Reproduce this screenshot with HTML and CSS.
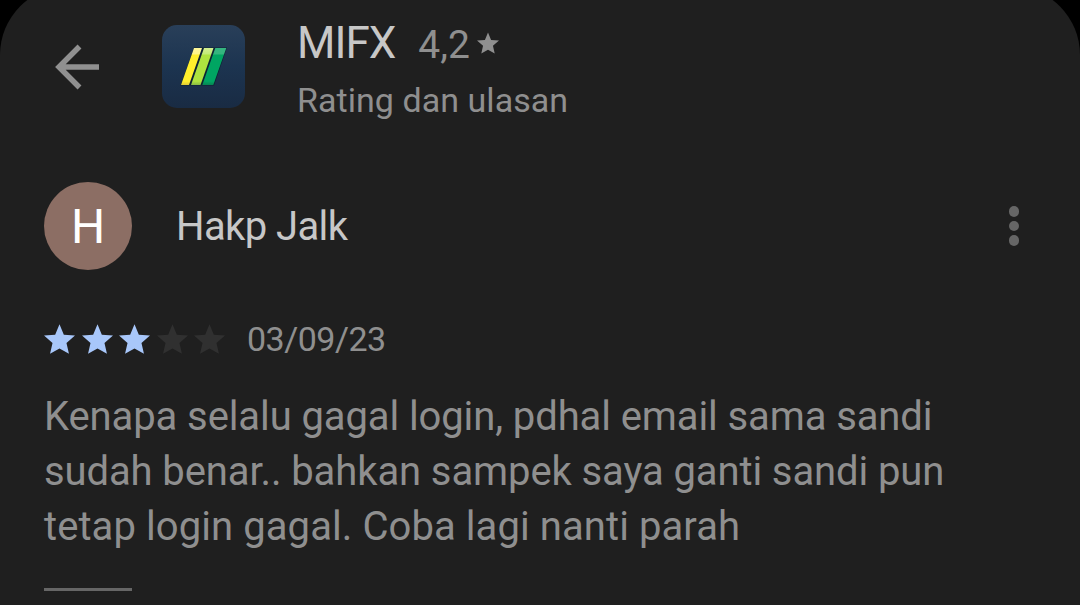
FILE: index.html
```
<!DOCTYPE html>
<html lang="id">

<head>
    <meta charset="UTF-8">
    <meta name="viewport" content="width=device-width, initial-scale=1.0">
    <title>MIFX - Rating dan ulasan</title>
    <link rel="stylesheet" href="styles.css">
</head>

<body>
    <svg class="sprite" width="0" height="0">
        <symbol id="star" viewBox="2 2 20 19">
            <path d="M12 17.6 18.1 21l-1.6-6.9L22 9.200l-7.200-.4L12 2 9.200 8.800 2 9.200l5.500 4.900L5.900 21z" />
        </symbol>
    </svg>

    <div class="sheet">
        <header class="header">
            <svg class="back" viewBox="0 0 46 46">
                <path d="M44 23H4M24.500 2.500 4 23l20.500 20.500" />
            </svg>
            <svg class="app-icon" viewBox="0 0 83 83">
                <defs>
                    <linearGradient id="navy" x1="0" y1="0" x2="0" y2="1">
                        <stop offset="0" stop-color="#293f59" />
                        <stop offset=".5" stop-color="#1c3450" />
                        <stop offset="1" stop-color="#192b43" />
                    </linearGradient>
                    <linearGradient id="yellow" x1="0" y1="0" x2="0" y2="1">
                        <stop offset="0" stop-color="#fff79a" />
                        <stop offset=".15" stop-color="#fff68a" />
                        <stop offset=".2" stop-color="#ffef2c" />
                        <stop offset=".9" stop-color="#ffef2c" />
                        <stop offset="1" stop-color="#ddc936" />
                    </linearGradient>
                    <linearGradient id="lime" x1="0" y1="0" x2="0" y2="1">
                        <stop offset="0" stop-color="#d3ef91" />
                        <stop offset=".15" stop-color="#c4eb79" />
                        <stop offset=".2" stop-color="#aee33f" />
                        <stop offset=".9" stop-color="#aee33f" />
                        <stop offset="1" stop-color="#86b944" />
                    </linearGradient>
                    <linearGradient id="green" x1="0" y1="0" x2="0" y2="1">
                        <stop offset="0" stop-color="#36b580" />
                        <stop offset=".15" stop-color="#34b57e" />
                        <stop offset=".2" stop-color="#00a562" />
                        <stop offset=".9" stop-color="#00a562" />
                        <stop offset="1" stop-color="#078452" />
                    </linearGradient>
                </defs>
                <rect width="83" height="83" rx="15" fill="url(#navy)" />
                <path class="shade" d="M32 22.500h33L52 60.500H18.500z" />
                <path fill="url(#yellow)" d="M32 23h8L27 60h-8z" />
                <path fill="url(#lime)" d="M42 23h9.500L38.500 60H29z" />
                <path fill="url(#green)" d="M53.300 23h11L51.300 60h-11z" />
            </svg>
            <div class="app">
                <div class="app-title">
                    <span class="app-name">MIFX</span>
                    <span class="score">4,2</span>
                    <svg class="score-star"><use href="#star" /></svg>
                </div>
                <div class="subtitle">Rating dan ulasan</div>
            </div>
        </header>

        <section class="review">
            <div class="author">
                <div class="avatar">H</div>
                <div class="author-name">Hakp Jalk</div>
                <div class="menu"><i></i><i></i><i></i></div>
            </div>

            <div class="rating">
                <div class="stars">
                    <svg class="star on"><use href="#star" /></svg>
                    <svg class="star on"><use href="#star" /></svg>
                    <svg class="star on"><use href="#star" /></svg>
                    <svg class="star"><use href="#star" /></svg>
                    <svg class="star"><use href="#star" /></svg>
                </div>
                <span class="date">03/09/23</span>
            </div>

            <p class="text">
                <span class="line">Kenapa selalu gagal login, pdhal email sama sandi</span>
                <span class="line">sudah benar.. bahkan sampek saya ganti sandi pun</span>
                <span class="line last">tetap login gagal. Coba lagi nanti parah</span>
            </p>
            <div class="divider"></div>
        </section>
    </div>
</body>

</html>
```
FILE: styles.css
```
* {
    margin: 0;
    padding: 0;
    box-sizing: border-box;
}

html {
    background-color: #000;
}

body {
    height: 605px;
    overflow: hidden;
    font-family: Roboto, "Liberation Sans", sans-serif;
    color: #8f8f8f;
}

.sprite {
    display: none;
}

.sheet {
    height: 619px;
    margin-top: -14px;
    padding-top: 30px;
    border-radius: 69px 69px 0 0;
    background-color: #1f1f1f;
}

/* header */
.header {
    height: 166px;
    padding-left: 55px;
    display: flex;
    align-items: flex-start;
}

.back {
    width: 46px;
    height: 46px;
    margin-top: 28px;
    fill: none;
    stroke: #909090;
    stroke-width: 5.5;
}

.app-icon {
    width: 83px;
    height: 83px;
    margin: 9px 52px 0 61px;
}

.shade {
    fill: #0c2233;
}

.app-title {
    height: 56px;
    display: flex;
    align-items: baseline;
    line-height: 54px;
}

.app-name {
    font-size: 44px;
    letter-spacing: -1px;
    color: #c7c7c7;
}

.score {
    margin-left: 23px;
    font-size: 39px;
}

.score-star {
    width: 22px;
    height: 22px;
    margin-left: 7px;
    align-self: flex-start;
    margin-top: 16px;
    fill: #8f8f8f;
}

.subtitle {
    font-size: 34px;
    line-height: 56px;
    letter-spacing: 0.05px;
}

/* review */
.review {
    padding: 0 44px;
}

.author {
    height: 88px;
    display: flex;
    align-items: center;
}

.avatar {
    width: 88px;
    height: 88px;
    border-radius: 50%;
    background-color: #8c6e64;
    color: #fff;
    font-size: 48px;
    line-height: 90px;
    text-align: center;
}

.author-name {
    flex: 1;
    margin-left: 44px;
    padding-top: 1px;
    font-size: 40px;
    letter-spacing: -0.6px;
    color: #c7c7c7;
}

.menu {
    width: 44px;
    display: flex;
    flex-direction: column;
    align-items: center;
    gap: 4px;
}

.menu i {
    width: 10.500px;
    height: 10.500px;
    border-radius: 50%;
    background-color: #666;
}

.rating {
    height: 60px;
    margin-top: 39px;
    display: flex;
    align-items: center;
}

.stars {
    display: flex;
    gap: 6.500px;
}

.star {
    width: 31px;
    height: 30px;
    fill: #303030;
}

.star.on {
    fill: #a8c7fa;
}

.date {
    margin-left: 22px;
    font-size: 34px;
    letter-spacing: -0.5px;
}

.text {
    margin-top: 20px;
    font-size: 40px;
    line-height: 55px;
    letter-spacing: -0.1px;
    white-space: nowrap;
}

.line {
    display: block;
}

.last {
    letter-spacing: 0.08px;
}

.divider {
    width: 88px;
    height: 3px;
    margin-top: 34px;
    background-color: #666;
}
```
